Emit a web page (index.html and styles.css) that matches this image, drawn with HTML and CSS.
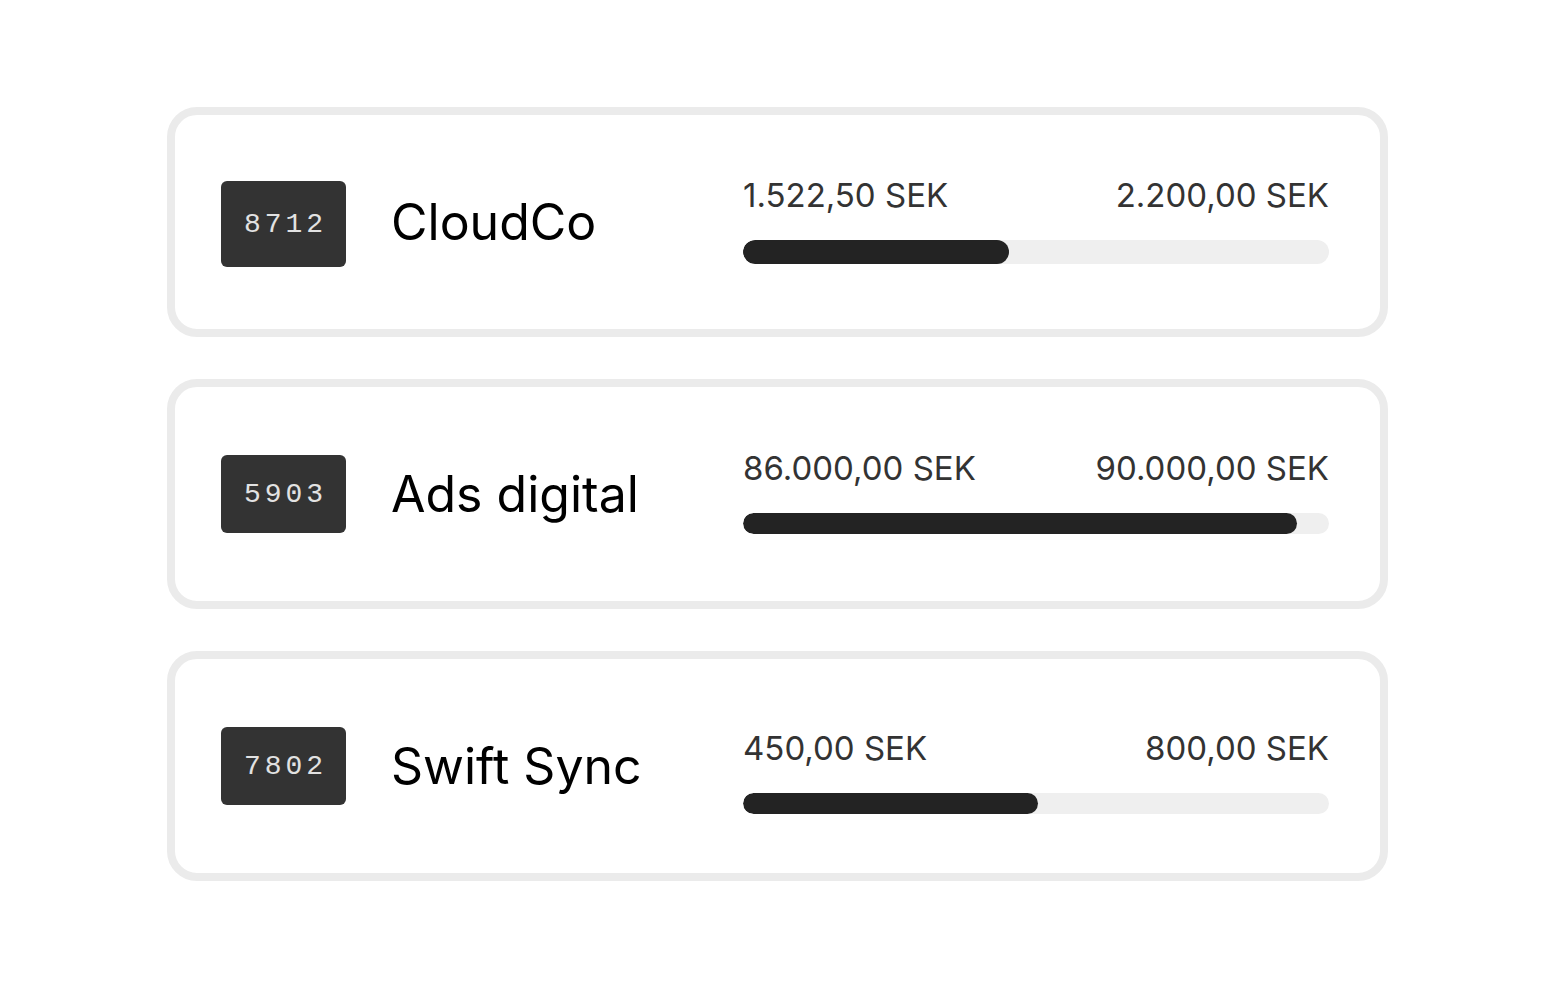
FILE: index.html
```html
<!DOCTYPE html>
<html lang="sv">
<head>
    <meta charset="UTF-8">
    <meta name="viewport" content="width=device-width, initial-scale=1.0">
    <title>Budgets</title>
    <link rel="stylesheet" href="styles.css">
</head>
<body>
    <div class="list">
        <div class="card">
            <div class="code code-tall">8712</div>
            <div class="name">CloudCo</div>
            <div class="usage">
                <div class="amounts">
                    <span>1.522,50 SEK</span>
                    <span>2.200,00 SEK</span>
                </div>
                <div class="track track-tall"><div class="fill" style="width: 45.4%"></div></div>
            </div>
        </div>

        <div class="card">
            <div class="code">5903</div>
            <div class="name">Ads digital</div>
            <div class="usage">
                <div class="amounts">
                    <span>86.000,00 SEK</span>
                    <span>90.000,00 SEK</span>
                </div>
                <div class="track"><div class="fill" style="width: 94.5%"></div></div>
            </div>
        </div>

        <div class="card">
            <div class="code">7802</div>
            <div class="name">Swift Sync</div>
            <div class="usage usage-low">
                <div class="amounts">
                    <span>450,00 SEK</span>
                    <span>800,00 SEK</span>
                </div>
                <div class="track"><div class="fill" style="width: 50.3%"></div></div>
            </div>
        </div>
    </div>
</body>
</html>
```

FILE: styles.css
```css
* {
    margin: 0;
    padding: 0;
    box-sizing: border-box;
}

body {
    font-family: 'Inter', 'Noto Sans', sans-serif;
    background: #ffffff;
    color: #000;
}

.list {
    width: 1221px;
    margin: 107px auto 0;
    display: flex;
    flex-direction: column;
    gap: 42px;
}

.card {
    height: 230px;
    border: 8px solid #ebebeb;
    border-radius: 30px;
    padding: 0 51px 0 46px;
    display: grid;
    grid-template-columns: 125px 1fr 586px;
    column-gap: 45px;
    align-items: center;
}

.code {
    height: 78px;
    background: #333333;
    border-radius: 6px;
    color: #e2e2e2;
    font-family: 'Liberation Mono', monospace;
    font-size: 28px;
    letter-spacing: 4px;
    display: flex;
    align-items: center;
    justify-content: center;
    padding-left: 4px;
}

.code-tall {
    height: 86px;
    margin-top: 4px;
}

.name {
    font-size: 50px;
    color: #000;
    white-space: nowrap;
}

.usage {
    display: flex;
    flex-direction: column;
    gap: 25px;
    margin-bottom: 6px;
}

.usage-low {
    margin: 10px 0 0;
}

.amounts {
    display: flex;
    justify-content: space-between;
    font-size: 33px;
    color: #333;
    line-height: 40px;
}

.track {
    height: 21px;
    background: #efefef;
    border-radius: 11px;
    overflow: hidden;
}

.track-tall {
    height: 24px;
    border-radius: 12px;
}

.fill {
    height: 100%;
    background: #232323;
    border-radius: 12px;
}
```
